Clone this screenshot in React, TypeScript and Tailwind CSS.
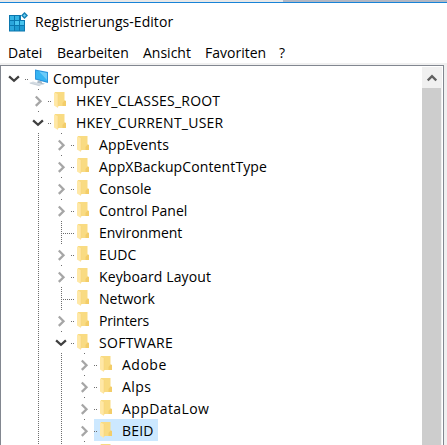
import React from 'react';

type State = 'open' | 'closed' | 'leaf';
interface Item {
  label: string;
  level: number;
  state: State;
  tracking?: string;
  selected?: boolean;
}

const items: Item[] = [
  { label: 'Computer', level: 0, state: 'open', tracking: 'tracking-[0.08px]' },
  { label: 'HKEY_CLASSES_ROOT', level: 1, state: 'closed', tracking: 'tracking-[0.21px]' },
  { label: 'HKEY_CURRENT_USER', level: 1, state: 'open', tracking: 'tracking-[0.24px]' },
  { label: 'AppEvents', level: 2, state: 'closed', tracking: 'tracking-[0.12px]' },
  { label: 'AppXBackupContentType', level: 2, state: 'closed', tracking: 'tracking-[0.12px]' },
  { label: 'Console', level: 2, state: 'closed' },
  { label: 'Control Panel', level: 2, state: 'closed' },
  { label: 'Environment', level: 2, state: 'leaf', tracking: 'tracking-[-0.08px]' },
  { label: 'EUDC', level: 2, state: 'closed', tracking: 'tracking-[0.15px]' },
  { label: 'Keyboard Layout', level: 2, state: 'closed', tracking: 'tracking-[0.12px]' },
  { label: 'Network', level: 2, state: 'leaf' },
  { label: 'Printers', level: 2, state: 'closed', tracking: 'tracking-[-0.2px]' },
  { label: 'SOFTWARE', level: 2, state: 'open', tracking: 'tracking-[0.3px]' },
  { label: 'Adobe', level: 3, state: 'closed', tracking: 'tracking-[0.5px]' },
  { label: 'Alps', level: 3, state: 'closed', tracking: 'tracking-[0.4px]' },
  { label: 'AppDataLow', level: 3, state: 'closed', tracking: 'tracking-[0.4px]' },
  { label: 'BEID', level: 3, state: 'closed', selected: true, tracking: 'tracking-[0.2px]' },
  { label: '', level: 3, state: 'closed' },
];

const dotsY = 'bg-[repeating-linear-gradient(to_bottom,#6e6e6e_0_1px,transparent_1px_2px)]';
const dotsX = 'bg-[repeating-linear-gradient(to_right,#6e6e6e_0_1px,transparent_1px_2px)]';

function Folder() {
  return (
    <svg className="block h-4 w-3 shrink-0" viewBox="0 0 12 16">
      <path d="M1 0h9.5v8.5L12 9v5H1z" fill="#f9db82" />
      <path d="M10.5 8.5L12 9v5H8.5v-3z" fill="#f3cd69" />
      <path d="M0 .3l4 2V16l-4-2.4z" fill="#ffe8a6" />
      <path d="M4 2.3V15" stroke="#f5d27a" strokeWidth=".5" />
    </svg>
  );
}

function Monitor() {
  return (
    <svg className="block h-[18px] w-5 shrink-0" viewBox="0 0 20 18">
      <path d="M6 .5L19 3v11L6 10.5z" fill="#2c94dc" />
      <path d="M7 1.8L18 4v8.5L7 9.5z" fill="#36b4f2" />
      <path d="M10 2.4L18 4v7z" fill="#6dcbf8" />
      <path d="M9 11.3l4 1.1v1.5l3 .8-2 .7-6-1.5z" fill="#a9b9c6" />
      <path d="M0 14l4-1.5 10 2.8-3.5 1.7z" fill="#d3dbe2" />
      <path d="M1 14.2l9.5 2.5" stroke="#b8c3cd" strokeWidth=".6" />
    </svg>
  );
}

function Chevron({ state }: { state: State }) {
  return state === 'open' ? (
    <svg className="block h-[22px] w-[13px]" viewBox="0 0 13 22" fill="none">
      <path d="M1.1 9.4L6 13.8l4.9-4.4" stroke="#404040" strokeWidth="2.3" />
    </svg>
  ) : (
    <svg className="block h-[22px] w-[13px]" viewBox="0 0 13 22" fill="none">
      <path d="M3.8 7.5l4.7 4.7-4.7 4.7" stroke="#a6a6a6" strokeWidth="2.3" />
    </svg>
  );
}

function Guide({ kind }: { kind: 'line' | State }) {
  return (
    <span className="grid h-[22px] w-[23px] shrink-0 grid-cols-[13px_10px]">
      <span className="col-start-1 row-start-1 flex justify-center">
        <span className={`w-px ${dotsY} ${kind === 'line' || kind === 'leaf' ? 'h-[22px]' : 'h-px'}`} />
      </span>
      {(kind === 'open' || kind === 'closed') && (
        <span className="col-start-1 row-start-1">
          <Chevron state={kind} />
        </span>
      )}
    </span>
  );
}

function Row({ item }: { item: Item }) {
  const { level, state } = item;
  return (
    <div className="flex h-[22px] shrink-0 items-start">
      {level === 0 ? (
        <span className="mr-[3px] w-[13px] shrink-0">
          <Chevron state={state} />
        </span>
      ) : (
        <>
          <span className="w-[24px] shrink-0" />
          {level > 1 && <Guide kind="line" />}
          {level > 2 && <Guide kind="line" />}
          <span className="-mr-[7px] flex">
            <Guide kind={state} />
          </span>
        </>
      )}
      <span className={`flex h-[22px] items-start pr-[4px] ${item.selected ? 'bg-[#cce8ff]' : ''}`}>
        <span
          className={`mt-3 h-px ${dotsX} ${
            level === 0 ? 'ml-px w-[3px]' : state === 'leaf' ? '-ml-[8px] w-[11px]' : 'w-[3px]'
          }`}
        />
        {level === 0 ? (
          <span className="mr-[4px] ml-px mt-[2px]"><Monitor /></span>
        ) : (
          <span className="mr-[10px] ml-[3px] mt-[3px]"><Folder /></span>
        )}
        <span className={`whitespace-pre leading-[24px] ${item.tracking ?? ''}`}>{item.label}</span>
      </span>
    </div>
  );
}

function RegistryIcon() {
  return (
    <svg className="block h-5 w-5" viewBox="0 0 20 20">
      <path d="M0 3h12v5h4v11.5H0z" fill="#0b77ae" />
      <path d="M1 4h4v4H1zM6 4h4v4H6z" fill="#35b5e5" />
      <path d="M1 9h4v4H1zM1 14h4v4.5H1z" fill="#2ba6dc" />
      <path d="M6 9h4v4H6zM11 9h4v4h-4z" fill="#48c4ee" />
      <path d="M6 14h4v4.5H6zM11 14h4v4.5h-4z" fill="#1e9bd2" />
      <path d="M15.5 0l3.5 3.5L15.5 7 12 3.5z" fill="#1481b6" />
      <path d="M15.5 2L17 3.5 15.5 5 14 3.5z" fill="#72d0f3" />
    </svg>
  );
}

export default function App() {
  return (
    <div className="flex h-[445px] w-[447px] flex-col overflow-hidden bg-white font-['Open_Sans','Noto_Sans',sans-serif] text-[14px] text-black">
      <div className="flex h-[3px] shrink-0 border-b border-[#1883d7]">
        <div className="w-[283px] bg-[#e8e8e8]" />
        <div className="flex-1 bg-[#b1b7c3]" />
      </div>
      <div className="flex h-[37px] shrink-0 items-start pl-[9px] pt-[9px]">
        <RegistryIcon />
        <span className="ml-[6px] leading-[20px] tracking-[0.05px]">Registrierungs-Editor</span>
      </div>
      <div className="flex h-[23px] shrink-0 items-start leading-[26px]">
        <span className="ml-[8px] w-[49px]">Datei</span>
        <span className="w-[86px]">Bearbeiten</span>
        <span className="w-[62px]">Ansicht</span>
        <span className="w-[74px]">Favoriten</span>
        <span>?</span>
      </div>
      <div className="flex min-h-0 flex-1 bg-[#f0f0f0] pt-[2px]">
        <div className="flex w-[444px] border-x border-t border-[#828790] bg-white pt-px">
          <div className="flex min-w-0 flex-1 flex-col overflow-hidden pl-[7px]">
            {items.map((item, i) => (
              <Row key={i} item={item} />
            ))}
          </div>
          <div className="mr-px flex w-5 flex-col bg-[#f0f0f0]">
            <div className="flex h-[21px] shrink-0 items-center justify-center">
              <svg className="block h-[8px] w-[10px]" viewBox="0 0 10 8" fill="none">
                <path d="M.7 6.5L5 2.2l4.3 4.3" stroke="#606060" strokeWidth="2.4" />
              </svg>
            </div>
            <div className="mr-px flex-1 bg-[#cdcdcd]" />
          </div>
        </div>
      </div>
    </div>
  );
}
